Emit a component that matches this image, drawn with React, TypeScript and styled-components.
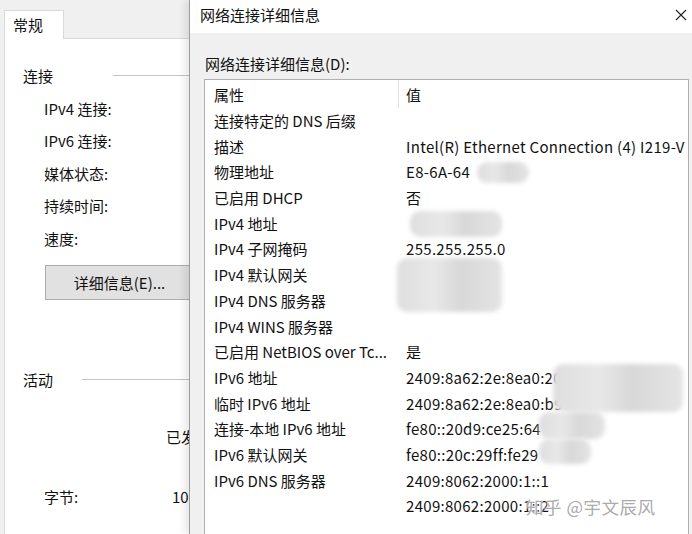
import React from "react";
import styled, { createGlobalStyle } from "styled-components";

const Global = createGlobalStyle`
  html, body { margin: 0; padding: 0; background: #f0f0f0; }
  body { font-family: "Noto Sans CJK SC", "Noto Sans", sans-serif; color: #111; }
  * { box-sizing: border-box; }
`;

const Screen = styled.div`
  position: relative;
  width: 692px;
  height: 534px;
  overflow: hidden;
  display: flex;
  background: #f0f0f0;
  font-size: 15px;
`;

/* ---------- left property window ---------- */
const LeftWindow = styled.div`
  width: 189px;
  flex: none;
  overflow: hidden;
  display: flex;
  flex-direction: column;
`;

const TabStrip = styled.div`
  display: flex;
  padding: 10px 0 0 4px;
  width: 420px;
`;

const Tab = styled.div`
  width: 60px;
  height: 29px;
  background: #fff;
  border: 1px solid #d9d9d9;
  border-bottom: none;
  padding: 0 0 2px 8px;
  display: flex;
  align-items: center;
  margin-bottom: -1px;
  position: relative;
  z-index: 1;
`;

const Panel = styled.div`
  flex: 1;
  width: 420px;
  margin-left: 4px;
  background: #fff;
  border-top: 1px solid #d9d9d9;
  border-left: 1px solid #d9d9d9;
  padding: 20.5px 0 0 18px;
  display: flex;
  flex-direction: column;
`;

const GroupHeader = styled.div<{ $lineGap: number; $top?: number }>`
  height: 32.5px;
  display: flex;
  align-items: center;
  margin-top: ${(p) => p.$top ?? 0}px;
  &::after {
    content: "";
    flex: 1;
    height: 1px;
    background: #c4c4c4;
    margin-left: ${(p) => p.$lineGap}px;
    margin-top: -1px;
  }
`;

const FieldRow = styled.div<{ $top?: number }>`
  height: 32.5px;
  display: grid;
  grid-template-columns: 122px 1fr;
  align-items: center;
  padding-left: 21px;
  margin-top: ${(p) => p.$top ?? 0}px;
  white-space: nowrap;
`;

const FieldValue = styled.span<{ $pad?: number }>`
  padding-left: ${(p) => p.$pad ?? 0}px;
`;

const DetailButton = styled.div`
  margin: 10px 0 0 22px;
  width: 149px;
  height: 35px;
  background: #e1e1e1;
  border: 1px solid #adadad;
  display: flex;
  align-items: center;
  justify-content: center;
  white-space: nowrap;
`;

/* ---------- dialog ---------- */
const Dialog = styled.div`
  flex: 1;
  display: flex;
  flex-direction: column;
  border-left: 1px solid #9c9c9c;
  box-shadow: -4px 0 8px rgba(0, 0, 0, 0.1);
  position: relative;
  z-index: 2;
`;

const TitleBar = styled.div`
  height: 33px;
  background: #fff;
  display: flex;
  align-items: center;
  justify-content: space-between;
  padding: 0 3px 4px 10px;
`;

const CloseButton = styled.div`
  width: 12px;
  height: 12px;
  display: flex;
  margin-right: 2px;
`;

const Body = styled.div`
  flex: 1;
  background: #f0f0f0;
  padding: 21px 3px 0 14px;
  display: flex;
  flex-direction: column;
`;

const Label = styled.div`
  height: 20px;
  line-height: 20px;
  padding-left: 1px;
  margin-bottom: 5px;
`;

const ListBox = styled.div`
  position: relative;
  flex: 1;
  background: #fff;
  border: 1px solid #b0b0b0;
  border-bottom: none;
  padding-top: 2px;
  display: grid;
  grid-template-columns: 194px 1fr;
  grid-auto-rows: 25.7px;
  align-content: start;
`;

const Cell = styled.div<{ $head?: boolean; $first?: boolean }>`
  display: flex;
  align-items: center;
  white-space: nowrap;
  overflow: hidden;
  padding-left: ${(p) => (p.$first ? 9 : 7)}px;
  border-right: ${(p) => (p.$head && p.$first ? "1px solid #e3e3e3" : "none")};
  margin-top: ${(p) => (p.$head ? -2 : 0)}px;
  padding-top: ${(p) => (p.$head ? 2 : 0)}px;
  height: ${(p) => (p.$head ? "27.7px" : "auto")};
`;

const Value = styled.span`
  letter-spacing: 0.3px;
`;

const Redact = styled.div<{ $x: number; $y: number; $w: number; $h: number }>`
  position: absolute;
  left: ${(p) => p.$x}px;
  top: ${(p) => p.$y}px;
  width: ${(p) => p.$w}px;
  height: ${(p) => p.$h}px;
  border-radius: 10px;
  background: linear-gradient(90deg, #dedede, #e8e8e8 35%, #d8d8d8 60%, #e4e4e4);
  filter: blur(2px);
`;

const Watermark = styled.div`
  position: absolute;
  left: 526px;
  top: 494px;
  font-size: 17.5px;
  letter-spacing: 0.5px;
  color: rgba(160, 160, 160, 0.9);
  text-shadow: 0 0 2px #fff, 0 0 2px #fff;
  white-space: nowrap;
  z-index: 5;
`;

const rows: [string, string][] = [
  ["连接特定的 DNS 后缀", ""],
  ["描述", "Intel(R) Ethernet Connection (4) I219-V"],
  ["物理地址", "E8-6A-64"],
  ["已启用 DHCP", "否"],
  ["IPv4 地址", ""],
  ["IPv4 子网掩码", "255.255.255.0"],
  ["IPv4 默认网关", ""],
  ["IPv4 DNS 服务器", ""],
  ["IPv4 WINS 服务器", ""],
  ["已启用 NetBIOS over Tc...", "是"],
  ["IPv6 地址", "2409:8a62:2e:8ea0:20"],
  ["临时 IPv6 地址", "2409:8a62:2e:8ea0:b9"],
  ["连接-本地 IPv6 地址", "fe80::20d9:ce25:64"],
  ["IPv6 默认网关", "fe80::20c:29ff:fe29"],
  ["IPv6 DNS 服务器", "2409:8062:2000:1::1"],
  ["", "2409:8062:2000:1::2"],
];

// redacted patches, relative to the list box's padding box (origin at x=205, y=80)
const patches = [
  { x: 272, y: 82, w: 52, h: 21 },
  { x: 205, y: 131, w: 92, h: 26 },
  { x: 192, y: 178, w: 105, h: 54 },
  { x: 348, y: 284, w: 130, h: 48 },
  { x: 334, y: 332, w: 66, h: 27 },
  { x: 334, y: 359, w: 52, h: 25 },
];

export default function App() {
  return (
    <>
      <Global />
      <Screen>
        <LeftWindow>
          <TabStrip>
            <Tab>常规</Tab>
          </TabStrip>
          <Panel>
            <GroupHeader $lineGap={60}>连接</GroupHeader>
            <FieldRow>IPv4 连接:</FieldRow>
            <FieldRow>IPv6 连接:</FieldRow>
            <FieldRow>媒体状态:</FieldRow>
            <FieldRow>持续时间:</FieldRow>
            <FieldRow>速度:</FieldRow>
            <DetailButton>详细信息(E)...</DetailButton>
            <GroupHeader $lineGap={29} $top={63.75}>
              活动
            </GroupHeader>
            <FieldRow $top={24.5}>
              <span />
              <FieldValue>已发送</FieldValue>
            </FieldRow>
            <FieldRow $top={27.5}>
              <span>字节:</span>
              <FieldValue $pad={6}>108,345,217</FieldValue>
            </FieldRow>
          </Panel>
        </LeftWindow>
        <Dialog>
          <TitleBar>
            <span>网络连接详细信息</span>
            <CloseButton>
              <svg width="12" height="12" viewBox="0 0 12 12">
                <path d="M1 1 L11 11 M11 1 L1 11" stroke="#222" strokeWidth="1.1" fill="none" />
              </svg>
            </CloseButton>
          </TitleBar>
          <Body>
            <Label>网络连接详细信息(D):</Label>
            <ListBox>
              <Cell $head $first>属性</Cell>
              <Cell $head>值</Cell>
              {rows.map(([k, v], i) => (
                <React.Fragment key={i}>
                  <Cell $first>{k}</Cell>
                  <Cell>
                    <Value>{v}</Value>
                  </Cell>
                </React.Fragment>
              ))}
              {patches.map((p, i) => (
                <Redact key={i} $x={p.x} $y={p.y} $w={p.w} $h={p.h} />
              ))}
            </ListBox>
          </Body>
        </Dialog>
        <Watermark>知乎 @宇文辰风</Watermark>
      </Screen>
    </>
  );
}
